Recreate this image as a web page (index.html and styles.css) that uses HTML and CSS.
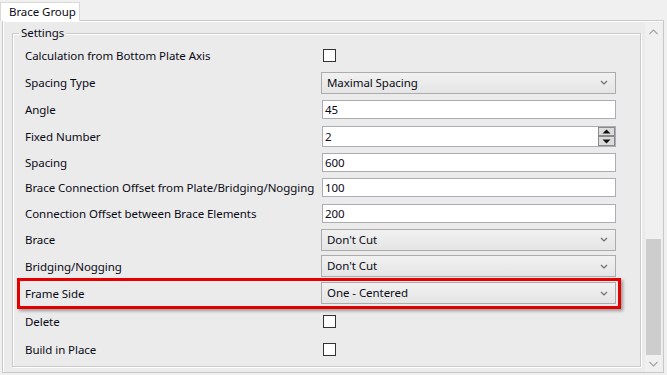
FILE: index.html
```html
<!DOCTYPE html>
<html lang="en">
<head>
    <meta charset="UTF-8">
    <title>Brace Group</title>
    <link rel="stylesheet" href="styles.css">
</head>
<body>
    <div class="tabs">
        <div class="tab">Brace Group</div>
    </div>
    <div class="panel">
        <div class="content">
            <fieldset class="group">
                <legend>Settings</legend>
                <div class="rows">
                    <div class="row">
                        <span class="label">Calculation from Bottom Plate Axis</span>
                        <span class="check"></span>
                    </div>
                    <div class="row">
                        <span class="label">Spacing Type</span>
                        <div class="combo">Maximal Spacing
                            <svg class="chev" width="8" height="5" viewBox="0 0 8 5"><path d="M1 1 L4 4 L7 1" fill="none" stroke="#6d6d6d" stroke-width="1.2"/></svg>
                        </div>
                    </div>
                    <div class="row">
                        <span class="label">Angle</span>
                        <div class="field">45</div>
                    </div>
                    <div class="row">
                        <span class="label">Fixed Number</span>
                        <div class="field spin">2
                            <div class="spin-btns">
                                <span class="spin-btn"><svg width="9" height="5" viewBox="0 0 9 5"><path d="M0.5 4.5 L4.5 0.5 L8.5 4.5 Z" fill="#111"/></svg></span>
                                <span class="spin-btn"><svg width="9" height="5" viewBox="0 0 9 5"><path d="M0.5 0.5 L4.5 4.5 L8.5 0.5 Z" fill="#111"/></svg></span>
                            </div>
                        </div>
                    </div>
                    <div class="row">
                        <span class="label">Spacing</span>
                        <div class="field">600</div>
                    </div>
                    <div class="row">
                        <span class="label">Brace Connection Offset from Plate/Bridging/Nogging</span>
                        <div class="field">100</div>
                    </div>
                    <div class="row">
                        <span class="label">Connection Offset between Brace Elements</span>
                        <div class="field">200</div>
                    </div>
                    <div class="row">
                        <span class="label">Brace</span>
                        <div class="combo">Don't Cut
                            <svg class="chev" width="8" height="5" viewBox="0 0 8 5"><path d="M1 1 L4 4 L7 1" fill="none" stroke="#6d6d6d" stroke-width="1.2"/></svg>
                        </div>
                    </div>
                    <div class="row">
                        <span class="label">Bridging/Nogging</span>
                        <div class="combo">Don't Cut
                            <svg class="chev" width="8" height="5" viewBox="0 0 8 5"><path d="M1 1 L4 4 L7 1" fill="none" stroke="#6d6d6d" stroke-width="1.2"/></svg>
                        </div>
                    </div>
                    <div class="row highlight">
                        <span class="label">Frame Side</span>
                        <div class="combo">One - Centered
                            <svg class="chev" width="8" height="5" viewBox="0 0 8 5"><path d="M1 1 L4 4 L7 1" fill="none" stroke="#6d6d6d" stroke-width="1.2"/></svg>
                        </div>
                    </div>
                    <div class="row">
                        <span class="label">Delete</span>
                        <span class="check"></span>
                    </div>
                    <div class="row">
                        <span class="label">Build in Place</span>
                        <span class="check"></span>
                    </div>
                </div>
            </fieldset>
        </div>
        <div class="scrollbar">
            <div class="sb-btn"><svg width="9" height="6" viewBox="0 0 9 6"><path d="M0.5 5 L4.5 1 L8.5 5" fill="none" stroke="#a3a3a3" stroke-width="1.1"/></svg></div>
            <div class="sb-track">
                <div class="sb-thumb"></div>
            </div>
            <div class="sb-btn"><svg width="9" height="6" viewBox="0 0 9 6"><path d="M0.5 1 L4.5 5 L8.5 1" fill="none" stroke="#a3a3a3" stroke-width="1.1"/></svg></div>
        </div>
    </div>
</body>
</html>
```

FILE: styles.css
```css
body {
    margin: 0;
    background-color: #f0f0f0;
    font-family: "Noto Sans", "Open Sans", sans-serif;
    font-size: 11.5px;
    letter-spacing: -0.06px;
    color: #0a0a14;
    width: 667px;
    height: 375px;
    overflow: hidden;
}

.tabs {
    height: 20px;
    display: flex;
    align-items: flex-end;
    position: relative;
    z-index: 1;
}

.tab {
    height: 19px;
    width: 80px;
    box-sizing: border-box;
    background-color: #fff;
    border: 1px solid #d9d9d9;
    border-bottom: none;
    padding-left: 8px;
    line-height: 18px;
    margin-bottom: -1px;
}

.panel {
    margin-left: 2px;
    width: 662px;
    height: 353px;
    box-sizing: border-box;
    border: 1px solid #c9c9c9;
    box-shadow: inset 1px 1px 0 #fff;
    background-color: #ebebeb;
    display: flex;
}

.content {
    flex: 1;
    padding: 4px 4px 5px 9px;
}

.group {
    margin: 0;
    padding: 0 24px 0 12px;
    height: 100%;
    box-sizing: border-box;
    border: 1px solid #cacaca;
    box-shadow: inset 1px 1px 0 #fff, 1px 1px 0 #fff;
}

.group legend {
    margin-left: -6px;
    padding: 0 2px;
    line-height: 16px;
    background-color: #ebebeb;
}

.rows {
    display: grid;
    grid-template-columns: 296px 1fr;
    grid-template-rows: 27px 27px 27px 26.5px 25.5px 25.5px 26.25px 26.25px 26.5px 27.5px 28px 28px;
    padding-top: 1px;
}

.row {
    display: contents;
}

.label {
    align-self: center;
    white-space: nowrap;
}

.check {
    align-self: center;
    width: 13px;
    height: 13px;
    box-sizing: border-box;
    margin-left: 2px;
    border: 1px solid #333;
    background-color: #fff;
}

.combo {
    align-self: center;
    height: 22px;
    box-sizing: border-box;
    border: 1px solid #acacac;
    background: linear-gradient(#f1f1f1, #e5e5e5);
    padding-left: 5px;
    line-height: 20px;
    display: flex;
    justify-content: space-between;
    align-items: center;
}

.chev {
    margin-right: 7px;
}

.field {
    align-self: center;
    height: 19px;
    margin-left: 1px;
    box-sizing: border-box;
    border: 1px solid #abadb3;
    background-color: #fff;
    padding-left: 2px;
    line-height: 17px;
}

.spin {
    height: 21px;
    line-height: 19px;
    display: flex;
    justify-content: space-between;
}

.spin-btns {
    display: flex;
    flex-direction: column;
    width: 17px;
}

.spin-btn {
    flex: 1;
    box-sizing: border-box;
    border: 1px solid #8a8a8a;
    background-color: #dcdcdc;
    display: flex;
    align-items: center;
    justify-content: center;
}

.highlight .label {
    position: relative;
}

.highlight .label::before {
    content: "";
    position: absolute;
    left: -8px;
    top: -7.5px;
    width: 604px;
    height: 31px;
    box-sizing: border-box;
    border: 3px solid #e50000;
    box-shadow: 2px 2px 3px rgba(0, 0, 0, 0.35);
    pointer-events: none;
}

.scrollbar {
    width: 17px;
    margin: 2px 1px 0 0;
    display: flex;
    flex-direction: column;
    background-color: #f0f0f0;
}

.sb-btn {
    height: 17px;
    display: flex;
    align-items: center;
    justify-content: center;
}

.sb-track {
    flex: 1;
    display: flex;
    flex-direction: column;
    justify-content: flex-end;
}

.sb-thumb {
    height: 116px;
    margin: 0 1px;
    background-color: #cdcdcd;
}
```
